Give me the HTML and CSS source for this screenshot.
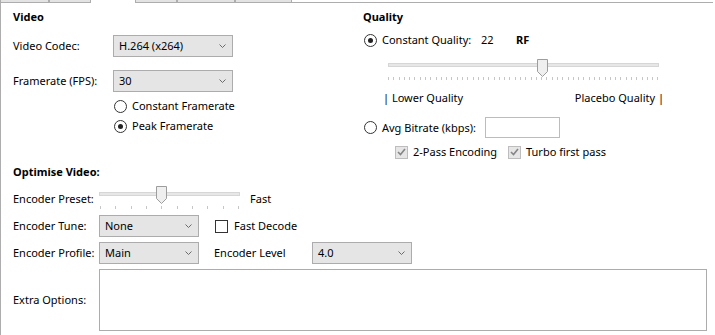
FILE: index.html
```html
<!DOCTYPE html>
<html>
<head>
<meta charset="utf-8">
<link rel="stylesheet" href="styles.css">
</head>
<body>
<div class="tabs">
  <div class="tab t1"></div>
  <div class="tab t2"></div>
  <div class="tab sel"></div>
  <div class="tab t4"></div>
  <div class="tab t5"></div>
  <div class="tab t6"></div>
  <div class="tabfill"></div>
</div>
<div class="panel">
  <div class="top">
    <section class="col">
      <div class="heading">Video</div>
      <div class="row codec">
        <span class="lbl100">Video Codec:</span>
        <div class="select w120"><span>H.264 (x264)</span><svg class="chev" width="7" height="4" viewBox="0 0 7 4"><path d="M0.5 0.5 L3.5 3.5 L6.5 0.5" fill="none" stroke="#6b6b6b" stroke-width="1"/></svg></div>
      </div>
      <div class="row fps">
        <span class="lbl100">Framerate (FPS):</span>
        <div class="select w120"><span>30</span><svg class="chev" width="7" height="4" viewBox="0 0 7 4"><path d="M0.5 0.5 L3.5 3.5 L6.5 0.5" fill="none" stroke="#6b6b6b" stroke-width="1"/></svg></div>
      </div>
      <div class="opt fr1"><span class="radio"></span><span>Constant Framerate</span></div>
      <div class="opt fr2"><span class="radio on"></span><span>Peak Framerate</span></div>
    </section>
    <section class="col">
      <div class="heading">Quality</div>
      <div class="qrow cq">
        <span class="radio on"></span>
        <span class="cqlbl">Constant Quality:</span>
        <span class="cqval">22</span>
        <span class="bold">RF</span>
      </div>
      <div class="slider qslider">
        <div class="track"></div>
        <svg class="thumb qthumb" width="11" height="18" viewBox="0 0 11 18"><path d="M0.5 0.5 H10.5 V12.5 L5.5 17.5 L0.5 12.5 Z" fill="#efefef" stroke="#9d9d9d"/></svg>
        <div class="ticks">
          <i></i><i></i><i></i><i></i><i></i><i></i><i></i><i></i><i></i><i></i>
          <i></i><i></i><i></i><i></i><i></i><i></i><i></i><i></i><i></i><i></i>
          <i></i><i></i><i></i><i></i><i></i><i></i><i></i><i></i><i></i><i></i>
          <i></i><i></i><i></i><i></i><i></i><i></i><i></i><i></i><i></i><i></i>
          <i></i><i></i><i></i><i></i><i></i><i></i><i></i><i></i><i></i><i></i>
          <i></i><i></i>
        </div>
      </div>
      <div class="qlabels"><span>| Lower Quality</span><span>Placebo Quality |</span></div>
      <div class="qrow abr">
        <span class="radio"></span>
        <span class="abrlbl">Avg Bitrate (kbps):</span>
        <div class="input"></div>
      </div>
      <div class="qrow checks">
        <span class="chk dis"><svg width="9" height="8" viewBox="0 0 9 8"><path d="M1 4 L3.5 6.5 L8 1" fill="none" stroke="#858585" stroke-width="1.6"/></svg></span>
        <span class="pass">2-Pass Encoding</span>
        <span class="chk dis"><svg width="9" height="8" viewBox="0 0 9 8"><path d="M1 4 L3.5 6.5 L8 1" fill="none" stroke="#858585" stroke-width="1.6"/></svg></span>
        <span>Turbo first pass</span>
      </div>
    </section>
  </div>
  <div class="heading opt-head">Optimise Video:</div>
  <div class="prow preset">
    <span class="lbl86 plbl">Encoder Preset:</span>
    <div class="slider pslider">
      <div class="track"></div>
      <svg class="thumb pthumb" width="11" height="18" viewBox="0 0 11 18"><path d="M0.5 0.5 H10.5 V12.5 L5.5 17.5 L0.5 12.5 Z" fill="#efefef" stroke="#9d9d9d"/></svg>
      <div class="ticks">
        <i></i><i></i><i></i><i></i><i></i><i></i><i></i><i></i><i></i><i></i>
      </div>
    </div>
    <span class="fast plbl">Fast</span>
  </div>
  <div class="row tune">
    <span class="lbl86">Encoder Tune:</span>
    <div class="select w100"><span>None</span><svg class="chev" width="7" height="4" viewBox="0 0 7 4"><path d="M0.5 0.5 L3.5 3.5 L6.5 0.5" fill="none" stroke="#6b6b6b" stroke-width="1"/></svg></div>
    <span class="chk fd"></span>
    <span>Fast Decode</span>
  </div>
  <div class="row profile">
    <span class="lbl86">Encoder Profile:</span>
    <div class="select w100"><span>Main</span><svg class="chev" width="7" height="4" viewBox="0 0 7 4"><path d="M0.5 0.5 L3.5 3.5 L6.5 0.5" fill="none" stroke="#6b6b6b" stroke-width="1"/></svg></div>
    <span class="levlbl">Encoder Level</span>
    <div class="select w100"><span>4.0</span><svg class="chev" width="7" height="4" viewBox="0 0 7 4"><path d="M0.5 0.5 L3.5 3.5 L6.5 0.5" fill="none" stroke="#6b6b6b" stroke-width="1"/></svg></div>
  </div>
  <div class="row extra">
    <span class="lbl86">Extra Options:</span>
    <div class="textarea"></div>
  </div>
</div>
</body>
</html>
```
FILE: styles.css
```css
* { box-sizing: border-box; margin: 0; padding: 0; }
html, body { width: 715px; height: 335px; overflow: hidden; background: #fff; }
body {
  font-family: "Noto Sans", "Liberation Sans", sans-serif;
  font-size: 11px;
  line-height: 16px;
  color: #000;
}

/* tab strip */
.tabs { display: flex; height: 3px; }
.tab {
  height: 3px;
  background: #e3e3e3;
  border-left: 1px solid #adadad;
  border-right: 1px solid #adadad;
  border-bottom: 1px solid #adadad;
}
.t1 { width: 49px; }
.t2 { width: 42px; }
.tab.sel { width: 44px; background: #fff; border: none; }
.t4 { width: 42px; }
.t5 { width: 58px; }
.t6 { width: 57px; }
.tabfill { flex: 1; border-bottom: 1px solid #adadad; margin-right: 2px; }

/* panel */
.panel {
  height: 332px;
  border-left: 1px solid #adadad;
  padding: 6px 0 0 12px;
}
.top { display: grid; grid-template-columns: 350px 1fr; height: 151px; }
.col { display: flex; flex-direction: column; }
.heading { font-weight: bold; height: 16px; }
.bold { font-weight: bold; }

.row { display: flex; align-items: center; }
.lbl100 { width: 100px; flex: none; }
.lbl86 { width: 86px; flex: none; }

.select {
  display: flex;
  align-items: center;
  justify-content: space-between;
  height: 22px;
  background: #e5e5e5;
  border: 1px solid #acacac;
  padding: 0 6px 0 5px;
  flex: none;
}
.w120 { width: 120px; }
.w100 { width: 100px; }
.chev { flex: none; }

.codec { margin-top: 10px; }
.fps { margin-top: 13px; }

.radio {
  width: 13px;
  height: 13px;
  border: 1px solid #333;
  border-radius: 50%;
  background: #fff;
  display: flex;
  align-items: center;
  justify-content: center;
  flex: none;
}
.radio.on::after {
  content: "";
  width: 5px;
  height: 5px;
  border-radius: 50%;
  background: #222;
}

.opt { display: flex; align-items: center; gap: 5px; height: 20px; margin-left: 101px; }
.fr1 { margin-top: 4px; }

/* quality column */
.qrow { display: flex; align-items: center; }
.cq { margin-top: 5px; height: 20px; margin-left: 1px; }
.cq .radio { margin-right: 5px; }
.cqlbl { width: 99px; }
.cqval { width: 35px; }

.slider { position: relative; }
.track {
  height: 4px;
  background: #e7e7e7;
  border: 1px solid #d6d6d6;
}
.thumb { position: absolute; top: 0; }
.ticks { display: flex; justify-content: space-between; height: 3px; }
.ticks i { display: block; width: 1px; height: 3px; background: #c6c6c6; }

.qslider { margin-top: 7px; margin-left: 25px; width: 271px; height: 26px; padding-top: 6px; }
.qslider .ticks { margin-top: 10px; }
.qthumb { left: 149px; top: 2px; }

.qlabels {
  display: flex;
  justify-content: space-between;
  margin-top: 7px;
  margin-left: 20px;
  width: 281px;
  height: 16px;
}

.abr { margin-top: 11px; height: 21px; margin-left: 1px; }
.abr .radio { margin-right: 5px; }
.abrlbl { width: 103px; }
.input { width: 75px; height: 21px; border: 1px solid #bcbcbc; background: #fff; }

.checks { margin-top: 6px; height: 16px; margin-left: 32px; }
.chk {
  width: 13px;
  height: 13px;
  border: 1px solid #333;
  background: #fff;
  display: flex;
  align-items: center;
  justify-content: center;
  flex: none;
}
.chk.dis { background: #e6e6e6; border-color: #bdbdbd; margin-right: 5px; }
.pass { width: 95px; }

/* optimise section */
.opt-head { margin-top: 4px; }
.prow { display: flex; align-items: flex-start; height: 26px; margin-top: 6px; }
.plbl { margin-top: 5px; }
.pslider { width: 141px; height: 26px; padding-top: 6px; }
.pslider .ticks { margin-top: 10px; padding: 0 1px; }
.pthumb { left: 57px; }
.fast { margin-left: 10px; }

.tune { margin-top: 3px; }
.fd { margin-left: 16px; margin-right: 6px; }
.profile { margin-top: 5px; }
.levlbl { width: 98px; margin-left: 15px; }

.extra { margin-top: 5px; }
.textarea { width: 608px; height: 62px; border: 1px solid #acacac; background: #fff; }
```
